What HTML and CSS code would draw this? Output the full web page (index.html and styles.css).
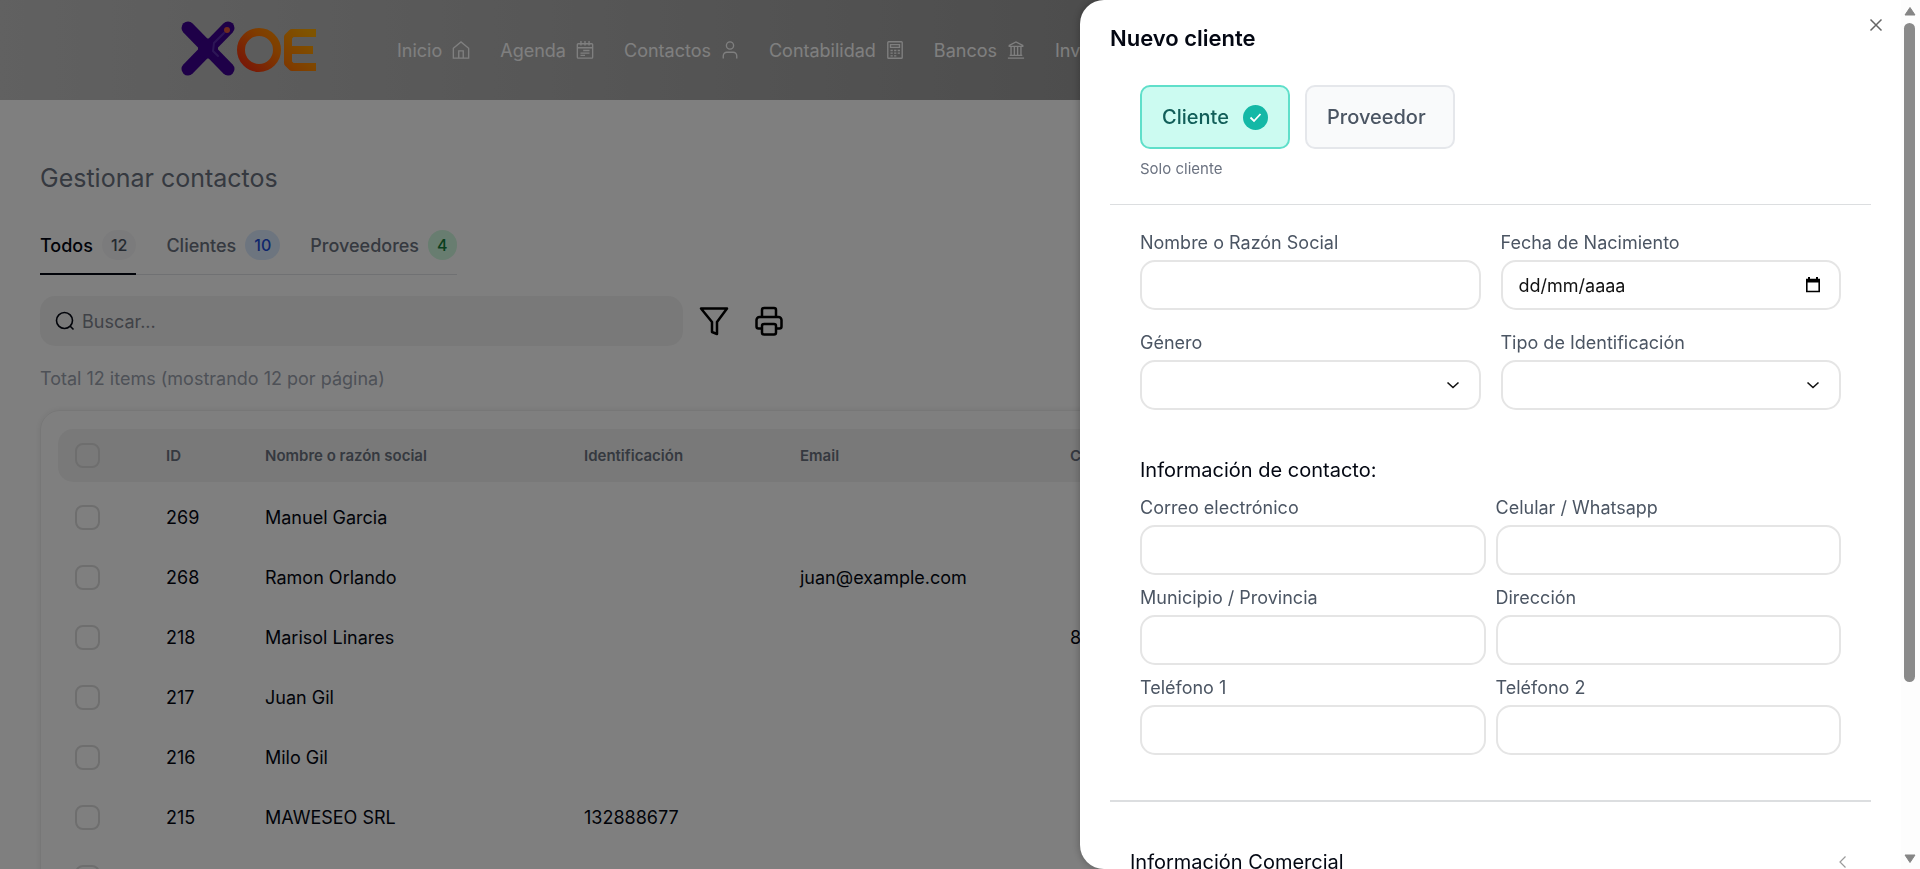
FILE: index.html
```html
<!DOCTYPE html>
<html lang="es">
<head>
<meta charset="utf-8">
<meta name="viewport" content="width=device-width, initial-scale=1">
<title>XOE - Gestionar contactos</title>
<link rel="stylesheet" href="styles.css">
</head>
<body>
<div class="page">
  <header class="topbar">
    <a class="logo" href="#" aria-label="XOE">
      <svg width="138" height="58" viewBox="0 0 138 58" fill="none">
        <defs>
          <linearGradient id="fire" x1="70" y1="56" x2="120" y2="4" gradientUnits="userSpaceOnUse">
            <stop offset="0" stop-color="#f02a10"/>
            <stop offset=".5" stop-color="#ff7a00"/>
            <stop offset="1" stop-color="#ffa800"/>
          </linearGradient>
        </defs>
        <g stroke="#3c0090" stroke-width="13" stroke-linecap="round">
          <line x1="8" y1="8" x2="48" y2="49"/>
          <line x1="48" y1="8" x2="8" y2="49"/>
        </g>
        <circle cx="28" cy="28.500" r="10" fill="#3c0090"/>
        <polyline points="44,13 34,23 33,31 38,36" stroke="#5a2cac" stroke-width="2" stroke-linecap="round" stroke-linejoin="round"/>
        <circle cx="47" cy="10" r="3" fill="#e0583c"/>
        <circle cx="79" cy="30" r="18" stroke="url(#fire)" stroke-width="8"/>
        <polyline points="136,13 112,13 108,17 108,43 112,47 136,47" stroke="url(#fire)" stroke-width="8" stroke-linejoin="round"/>
        <line x1="108" y1="30" x2="133" y2="30.1" stroke="url(#fire)" stroke-width="8"/>
      </svg>
    </a>
    <nav class="nav" aria-label="Principal">
      <a class="nav-link" href="#">Inicio
        <svg class="nav-icon" viewBox="0 0 20 20"><path d="M1.500 8 10 1l8.500 7v11h-17zM7.500 19v-8h5v8"/></svg>
      </a>
      <a class="nav-link" href="#">Agenda
        <svg class="nav-icon" viewBox="0 0 20 20"><rect x="1.500" y="3" width="17" height="16" rx="1"/><path d="M1.500 7.500h17M5.500 0v5M10 0v5M14.500 0v5M8 10.500h7M5 13.500h10M5 16h5"/></svg>
      </a>
      <a class="nav-link" href="#">Contactos
        <svg class="nav-icon" viewBox="0 0 20 20"><circle cx="10" cy="5" r="4"/><path d="M2.500 19.500v-3a4 4 0 0 1 4-4h7a4 4 0 0 1 4 4v3"/></svg>
      </a>
      <a class="nav-link" href="#">Contabilidad
        <svg class="nav-icon" viewBox="0 0 20 20"><rect x="2" y=".8" width="16" height="18.400" rx="1"/><path d="M5 4h10v3H5zM5 10.500h2.500M9 10.500h2.500M13 10.500h2.500M5 13.500h2.500M9 13.500h2.500M13 13.500h2.500M5 16.500h2.500M9 16.500h2.500"/></svg>
      </a>
      <a class="nav-link" href="#">Bancos
        <svg class="nav-icon" viewBox="0 0 20 20"><path d="M2.500 6V5L10 1l7.500 4v1zM4.500 6v10M8.200 6v10M11.800 6v10M15.500 6v10M3 16h14M1 19h18"/></svg>
      </a>
      <a class="nav-link" href="#">Inventario</a>
    </nav>
  </header>

  <main class="main">
    <h1 class="page-title">Gestionar contactos</h1>

    <div class="tabs" role="tablist">
      <button class="tab tab-active" type="button" role="tab" aria-selected="true">Todos <span class="badge">12</span></button>
      <button class="tab" type="button" role="tab" aria-selected="false">Clientes <span class="badge badge-blue">10</span></button>
      <button class="tab" type="button" role="tab" aria-selected="false">Proveedores <span class="badge badge-green">4</span></button>
    </div>

    <div class="tools">
      <label class="search">
        <svg width="20" height="20" viewBox="0 0 20 20" fill="none" stroke="#030712" stroke-width="1.600"><circle cx="9.500" cy="9.500" r="8"/><path d="m15 15 3.500 3.500"/></svg>
        <input class="search-input" type="search" placeholder="Buscar..." aria-label="Buscar">
      </label>
      <button class="tool-button" type="button" aria-label="Filtrar">
        <svg width="30" height="30" viewBox="0 0 30 30" fill="none" stroke="#000" stroke-width="2.500" stroke-linejoin="round"><path d="M2 2.500h26L18 16v12l-5-2V16z"/></svg>
      </button>
      <button class="tool-button" type="button" aria-label="Imprimir">
        <svg width="30" height="30" viewBox="0 0 30 30" fill="none" stroke="#000" stroke-width="2.500" stroke-linejoin="round"><path d="M8 11V4a2 2 0 0 1 2-2h10a2 2 0 0 1 2 2v7M8 22.500H4.500a2 2 0 0 1-2-2V14a3 3 0 0 1 3-3h19a3 3 0 0 1 3 3v6.500a2 2 0 0 1-2 2H22"/><rect x="8" y="18" width="14" height="10.500" rx="2"/></svg>
      </button>
    </div>

    <p class="total">Total 12 items (mostrando 12 por página)</p>

    <section class="card">
      <table class="table">
        <colgroup><col class="col-check"><col class="col-id"><col class="col-name"><col class="col-doc"><col class="col-email"><col></colgroup>
        <thead>
          <tr><th><input class="check" type="checkbox" aria-label="Seleccionar todo"></th><th>ID</th><th>Nombre o razón social</th><th>Identificación</th><th>Email</th><th>Celular</th></tr>
        </thead>
        <tbody>
          <tr><td><input class="check" type="checkbox" aria-label="Seleccionar 269"></td><td>269</td><td>Manuel Garcia</td><td></td><td></td><td></td></tr>
          <tr><td><input class="check" type="checkbox" aria-label="Seleccionar 268"></td><td>268</td><td>Ramon Orlando</td><td></td><td>juan@example.com</td><td></td></tr>
          <tr><td><input class="check" type="checkbox" aria-label="Seleccionar 218"></td><td>218</td><td>Marisol Linares</td><td></td><td></td><td>8</td></tr>
          <tr><td><input class="check" type="checkbox" aria-label="Seleccionar 217"></td><td>217</td><td>Juan Gil</td><td></td><td></td><td></td></tr>
          <tr><td><input class="check" type="checkbox" aria-label="Seleccionar 216"></td><td>216</td><td>Milo Gil</td><td></td><td></td><td></td></tr>
          <tr><td><input class="check" type="checkbox" aria-label="Seleccionar 215"></td><td>215</td><td>MAWESEO SRL</td><td>132888677</td><td></td><td></td></tr>
          <tr><td><input class="check" type="checkbox" aria-label="Seleccionar fila"></td><td></td><td></td><td></td><td></td><td></td></tr>
        </tbody>
      </table>
    </section>
  </main>
</div>

<div class="overlay"></div>

<aside class="drawer" role="dialog" aria-labelledby="drawer-title">
  <form class="drawer-body">
    <h2 class="drawer-title" id="drawer-title">Nuevo cliente</h2>

    <div class="block">
      <div class="types">
        <button class="type type-active" type="button" aria-pressed="true">Cliente
          <svg width="25" height="25" viewBox="0 0 25 25" fill="none"><circle cx="12.500" cy="12.500" r="12.500" fill="#14b8a6"/><path d="m7.500 12.500 3.500 3.500 6.500-7" stroke="#fff" stroke-width="1.800"/></svg>
        </button>
        <button class="type" type="button" aria-pressed="false">Proveedor</button>
      </div>
      <p class="hint">Solo cliente</p>
    </div>

    <hr class="rule">

    <div class="block grid">
      <div class="field">
        <label for="nombre">Nombre o Razón Social</label>
        <input class="control" id="nombre" type="text">
      </div>
      <div class="field">
        <label for="fecha">Fecha de Nacimiento</label>
        <div class="control-wrap">
          <input class="control" id="fecha" type="text" placeholder="dd/mm/aaaa">
          <svg class="control-icon" width="16" height="16" viewBox="0 0 16 16" fill="none"><path d="M1.800 2.500h12.400v12H1.800z" stroke="#000" stroke-width="1.600"/><path d="M1 2h14v3.500H1zM3 0h2v3H3zM11 0h2v3h-2z" fill="#000"/></svg>
        </div>
      </div>
      <div class="field">
        <label for="genero">Género</label>
        <div class="control-wrap">
          <select class="control" id="genero"><option></option></select>
          <svg class="control-icon" width="16" height="16" viewBox="0 0 16 16" fill="none" stroke="#111" stroke-width="1.600"><path d="m2.500 5.500 5.500 5 5.500-5"/></svg>
        </div>
      </div>
      <div class="field">
        <label for="tipo">Tipo de Identificación</label>
        <div class="control-wrap">
          <select class="control" id="tipo"><option></option></select>
          <svg class="control-icon" width="16" height="16" viewBox="0 0 16 16" fill="none" stroke="#111" stroke-width="1.600"><path d="m2.500 5.500 5.500 5 5.500-5"/></svg>
        </div>
      </div>
    </div>

    <div class="block contact">
      <h3 class="section-title">Información de contacto:</h3>
      <div class="grid grid-tight">
        <div class="field"><label for="correo">Correo electrónico</label><input class="control" id="correo" type="email"></div>
        <div class="field"><label for="celular">Celular / Whatsapp</label><input class="control" id="celular" type="tel"></div>
        <div class="field"><label for="municipio">Municipio / Provincia</label><input class="control" id="municipio" type="text"></div>
        <div class="field"><label for="direccion">Dirección</label><input class="control" id="direccion" type="text"></div>
        <div class="field"><label for="tel1">Teléfono 1</label><input class="control" id="tel1" type="tel"></div>
        <div class="field"><label for="tel2">Teléfono 2</label><input class="control" id="tel2" type="tel"></div>
      </div>
    </div>

    <hr class="rule rule-thick">

    <button class="accordion" type="button" aria-expanded="false">Información Comercial
      <svg width="16" height="16" viewBox="0 0 16 16" fill="none" stroke="#9a9a9a" stroke-width="1.200"><path d="M10.500 2.500 5 8l5.500 5.500"/></svg>
    </button>
  </form>
  <button class="close" type="button" aria-label="Cerrar">
    <svg width="14" height="14" viewBox="0 0 14 14" fill="none" stroke="#666" stroke-width="1.500"><path d="m1.500 1.500 11 11M12.500 1.500l-11 11"/></svg>
  </button>
  <div class="scrollbar" aria-hidden="true">
    <svg width="12" height="10" viewBox="0 0 12 10"><path d="M6 1.500 11 9H1z" fill="#858585" stroke="#858585" stroke-linejoin="round"/></svg>
    <div class="track"><div class="thumb"></div></div>
    <svg width="12" height="10" viewBox="0 0 12 10"><path d="M6 8.500 11 1H1z" fill="#858585" stroke="#858585" stroke-linejoin="round"/></svg>
  </div>
</aside>
</body>
</html>
```
FILE: styles.css
```css
* { box-sizing: border-box; }

body {
  margin: 0;
  background: #fff;
  color: #030712;
  font-family: Inter, "Liberation Sans", sans-serif;
  font-size: 18px;
}

button, input, select { font: inherit; color: inherit; }
button { padding: 0; border: 0; background: none; cursor: pointer; }
h1, h2, h3, p { margin: 0; font-weight: 400; }
svg { display: block; flex: none; }

.page { height: 100vh; overflow: hidden; }

/* Top bar */
.topbar {
  display: flex;
  align-items: center;
  gap: 79px;
  height: 100px;
  padding-left: 180px;
  background: linear-gradient(90deg, #c2c2c2, #7c7c7c);
}
.logo { padding-bottom: 2px; }
.nav { display: flex; gap: 30px; }
.nav-link {
  display: flex;
  align-items: center;
  gap: 10px;
  color: #fff;
  text-decoration: none;
}
.nav-icon {
  width: 18px;
  height: 18px;
  fill: none;
  stroke: #fff;
  stroke-width: 1.5;
}

/* Contacts list */
.main { padding: 63px 40px 0; }
.page-title { font-size: 25px; line-height: 30px; color: #6b7280; }
.tabs {
  display: flex;
  gap: 30px;
  width: max-content;
  margin-top: 32px;
  border-bottom: 1px solid #e0e2e6;
}
.tab {
  display: flex;
  align-items: center;
  gap: 9px;
  height: 50px;
  padding-bottom: 8px;
  border-bottom: 2px solid transparent;
  margin-bottom: -1px;
  color: #6b7280;
  font-weight: 500;
}
.tab-active { color: #030712; border-color: #030712; }
.badge {
  padding: 0 9px;
  border-radius: 15px;
  background: #f7f7f8;
  color: #4b5563;
  font-size: 16px;
  line-height: 30px;
}
.badge-blue { background: #dbeafe; color: #1d4ed8; }
.badge-green { background: #d1fae0; color: #15803d; }

.tools { display: flex; align-items: center; gap: 25px; margin-top: 21px; }
.search {
  display: flex;
  align-items: center;
  gap: 5px;
  width: 643px;
  height: 50px;
  margin-right: -9px;
  padding: 0 15px;
  border-radius: 15px;
  background: #f3f3f3;
}
.search-input { flex: 1; padding: 0 2px; border: 0; background: none; outline: 0; }
.search-input::placeholder { color: #80858f; }
.total { margin-top: 20px; line-height: 25px; color: #9ca3af; }

.card {
  margin-top: 19px;
  padding: 18px 17px;
  border: 1px solid #eee;
  border-radius: 20px;
  box-shadow: 0 0 6px rgba(0, 0, 0, .08);
}
.table { width: 100%; table-layout: fixed; border-collapse: collapse; }
.col-check { width: 98px; }
.col-id { width: 99px; }
.col-name { width: 319px; }
.col-doc { width: 216px; }
.col-email { width: 270px; }
.table th, .table td { padding: 0 10px; text-align: left; }
.table th {
  height: 53px;
  background: #f3f3f3;
  color: #6b7280;
  font-size: 15px;
  font-weight: 600;
}
.table th:first-child { border-radius: 15px 0 0 15px; }
.table th:last-child { border-radius: 0 15px 15px 0; }
.table th:first-child, .table td:first-child { padding-left: 17px; }
.table tbody::before { content: ""; display: block; height: 5px; }
.table td { height: 60px; }
.check {
  appearance: none;
  display: block;
  width: 25px;
  height: 25px;
  margin: 0;
  border: 2px solid #dcdcdc;
  border-radius: 8px;
}

/* Drawer */
.overlay { position: fixed; inset: 0; background: rgba(0, 0, 0, .5); }
.drawer {
  position: fixed;
  top: 0;
  right: 0;
  bottom: 0;
  display: flex;
  width: 43.75%;
  border-radius: 24px 0 0 24px;
  background: #fff;
  overflow: hidden;
  box-shadow: 0 0 8px rgba(0, 0, 0, .3);
}
.drawer-body { flex: 1; padding: 23px 30px 0; overflow: hidden; }
.drawer-title { margin-bottom: 32px; font-size: 22px; font-weight: 600; line-height: 30px; }
.close { position: absolute; top: 18px; right: 37px; }
.block { padding: 0 30px; }
.types { display: flex; gap: 15px; }
.type {
  display: flex;
  align-items: center;
  justify-content: space-between;
  width: 150px;
  height: 64px;
  padding: 0 20px;
  border: 2px solid #e5e7eb;
  border-radius: 10px;
  background: #f9fafb;
  color: #4b5563;
  font-size: 20px;
  font-weight: 500;
}
.type-active { border-color: #5fdfca; background: #ccfbf1; color: #115e59; }
.hint { margin-top: 10px; font-size: 15px; line-height: 20px; color: #6b7280; }
.rule { height: 1px; margin: 25px 0; border: 0; background: #dcdee0; }
.rule-thick { height: 2px; margin: 45px 0; }

.grid { display: grid; grid-template-columns: 1fr 1fr; gap: 20px; }
.grid-tight { gap: 10px; }
.field { display: flex; flex-direction: column; gap: 5px; }
.field label { line-height: 25px; color: #4b5563; }
.control {
  display: block;
  width: 100%;
  height: 50px;
  padding: 0 16px;
  border: 2px solid #e5e5e5;
  border-radius: 15px;
  background: #fff;
  appearance: none;
  outline: 0;
}
.control::placeholder { color: #111; }
.control-wrap { position: relative; }
.control-icon { position: absolute; top: 17px; right: 20px; pointer-events: none; }
.contact { margin-top: 45px; }
.section-title { margin-bottom: 10px; font-size: 20px; line-height: 30px; }
.accordion {
  display: flex;
  align-items: center;
  justify-content: space-between;
  width: 100%;
  padding: 0 20px;
  font-size: 20px;
  line-height: 30px;
}

.scrollbar {
  display: flex;
  flex-direction: column;
  align-items: center;
  gap: 7px;
  width: 19px;
  padding: 6px 2px 5px 0;
  background: #fdfdfd;
}
.track { flex: 1; }
.thumb { width: 11px; height: 80%; border-radius: 6px; background: #8a8a8a; }
```
